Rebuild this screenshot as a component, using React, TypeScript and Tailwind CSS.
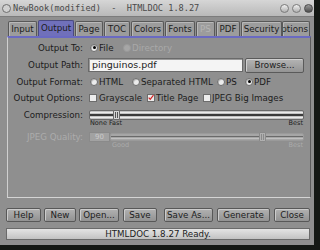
import React from 'react';

const tabs = [
  { label: 'Input', w: 'w-[29px]' },
  { label: 'Output', w: 'w-[36px]', active: true },
  { label: 'Page', w: 'w-[28px]' },
  { label: 'TOC', w: 'w-[26px]' },
  { label: 'Colors', w: 'w-[33px]' },
  { label: 'Fonts', w: 'w-[30px]' },
  { label: 'PS', w: 'w-[19px]', disabled: true },
  { label: 'PDF', w: 'w-[24px]' },
  { label: 'Security', w: 'w-[41px]' },
];

const buttons = [
  { label: 'Help', cls: 'w-[35px] ml-0' },
  { label: 'New', cls: 'w-[32px] ml-[3px]' },
  { label: 'Open...', cls: 'w-[40px] ml-[3px]' },
  { label: 'Save', cls: 'w-[34px] ml-[4px]' },
  { label: 'Save As...', cls: 'w-[49px] ml-[7px]' },
  { label: 'Generate', cls: 'w-[53px] ml-[4px]' },
  { label: 'Close', cls: 'w-[36px] ml-[4px]' },
];

function Radio({ checked, disabled }: { checked?: boolean; disabled?: boolean }) {
  return (
    <span
      className={
        disabled
          ? 'w-[8px] h-[8px] rounded-full bg-[#a6a6a6] border border-[#9a9a9a] shrink-0'
          : 'w-[8px] h-[8px] rounded-full bg-[#ececec] border border-[#6c6c6c] shadow-[inset_1px_1px_0_#bdbdbd] flex items-center justify-center shrink-0'
      }
    >
      {checked && <span className="w-[3px] h-[3px] rounded-full bg-black" />}
    </span>
  );
}

function Check({ checked }: { checked?: boolean }) {
  return (
    <span className="w-[8px] h-[8px] bg-[#ececec] border border-[#6c6c6c] flex items-center justify-center shrink-0">
      {checked && (
        <svg width="7" height="7" viewBox="0 0 7 7">
          <path d="M0.8 3.6 L2.6 5.6 L6.4 0.8" stroke="#d42020" strokeWidth="1.4" fill="none" />
        </svg>
      )}
    </span>
  );
}

function Label({ children, disabled }: { children: React.ReactNode; disabled?: boolean }) {
  return (
    <span className={`w-[75px] text-right shrink-0 whitespace-nowrap ${disabled ? 'text-[#acacac]' : ''}`}>
      {children}
    </span>
  );
}

function Thumb() {
  return (
    <span className="w-[7px] h-[10px] bg-[#d4d4d4] border border-[#6a6a6a] rounded-[1px] flex items-center justify-center gap-[1px]">
      <span className="w-px h-[6px] bg-[#555]" />
      <span className="w-px h-[6px] bg-[#555]" />
    </span>
  );
}

export default function App() {
  return (
    <div className="w-[320px] h-[250px] bg-[#141814] flex overflow-hidden font-['DejaVu_Sans',sans-serif] text-[8.7px] leading-none text-[#1c1c1c]">
      <div className="w-[314px] h-[245px] bg-[#8f8f8f] flex flex-col">
        {/* title bar */}
        <div className="h-[17px] bg-gradient-to-b from-[#d6d6d6] to-[#b9b9b9] flex items-center pl-[2px] pr-[1px] border-b border-[#7c7c7c]">
          <span className="w-[9px] h-[9px] rounded-full border border-[#6e6e6e] bg-[#d0d0d0]" />
          <span className="ml-[2px] font-['DejaVu_Sans_Mono',monospace] text-[8.6px] text-[#4a4a4a] whitespace-pre">
            NewBook(modified)  -  HTMLDOC 1.8.27
          </span>
          <div className="ml-auto flex gap-[3px]">
            <span className="w-[9px] h-[9px] rounded-full border border-[#7a7a7a] bg-gradient-to-b from-[#f0f0f0] to-[#b0b0b0]" />
            <span className="w-[9px] h-[9px] rounded-full border border-[#7a7a7a] bg-gradient-to-b from-[#f0f0f0] to-[#b0b0b0]" />
            <span className="w-[9px] h-[9px] rounded-full border border-[#4a4a4a] bg-gradient-to-b from-[#9a9a9a] to-[#4e4e4e]" />
          </div>
        </div>

        <div className="flex flex-col pl-[6px]">
          {/* tabs */}
          <div className="mt-[3px] h-[16px] flex items-end pl-[2px] gap-[1px]">
            {tabs.map((t) => (
              <div
                key={t.label}
                className={`${t.w} shrink-0 flex items-center justify-center border border-b-0 rounded-t-[2px] ${
                  t.active
                    ? 'h-[16px] bg-[#7070bb] border-[#4a4a80]'
                    : 'h-[15px] bg-[#9c9c9c] border-[#585858] shadow-[inset_1px_1px_0_#b8b8b8]'
                } ${t.disabled ? 'text-[#b4b4b4]' : ''}`}
              >
                {t.label}
              </div>
            ))}
            <div className="w-[28px] -ml-[1px] h-[15px] shrink-0 flex items-center justify-end pr-[1px] overflow-hidden border border-b-0 border-[#585858] rounded-t-[2px] bg-[#9c9c9c] shadow-[inset_1px_1px_0_#b8b8b8]">
              <span className="whitespace-nowrap">Options</span>
            </div>
          </div>

          {/* panel */}
          <div className="ml-[1px] w-[304px] h-[162px] border-t-2 border-t-[#6a6ac2] border-l border-l-[#cfcfcf] border-b border-b-[#d4d4d4] border-r border-r-[#5c5c5c] flex flex-col">
            <div className="mt-[2px] h-[16px] flex items-center">
              <Label>Output To:</Label>
              <div className="ml-[6px] flex items-center">
                <div className="w-[34px] flex items-center pl-[1px] gap-[1px]">
                  <Radio checked />
                  <span>File</span>
                </div>
                <div className="flex items-center gap-[1px] text-[#a9a9a9]">
                  <Radio disabled />
                  <span>Directory</span>
                </div>
              </div>
            </div>

            <div className="h-[18px] flex items-center">
              <Label>Output Path:</Label>
              <div className="ml-[5px] w-[155px] h-[14px] bg-[#f4f4f4] border border-[#6a6a6a] shadow-[inset_1px_1px_0_#9a9a9a] flex items-center pl-[3px] text-[9.5px]">
                pinguinos.pdf
              </div>
              <div className="ml-[2px] w-[59px] h-[15px] flex items-center justify-center border border-[#5a5a5a] rounded-[2px] bg-gradient-to-b from-[#b4b4b4] to-[#949494] shadow-[inset_1px_1px_0_#d0d0d0]">
                Browse...
              </div>
            </div>

            <div className="h-[16px] flex items-center">
              <Label>Output Format:</Label>
              <div className="ml-[6px] flex items-center">
                <div className="w-[42px] flex items-center pl-[1px] gap-[1px]">
                  <Radio />
                  <span>HTML</span>
                </div>
                <div className="w-[86px] flex items-center pl-[1px] gap-[1px]">
                  <Radio />
                  <span className="whitespace-nowrap">Separated HTML</span>
                </div>
                <div className="w-[28px] flex items-center gap-[1px]">
                  <Radio />
                  <span>PS</span>
                </div>
                <div className="flex items-center gap-[1px]">
                  <Radio checked />
                  <span>PDF</span>
                </div>
              </div>
            </div>

            <div className="h-[16px] flex items-center">
              <Label>Output Options:</Label>
              <div className="ml-[6px] flex items-center">
                <div className="w-[58px] flex items-center gap-[2px]">
                  <Check />
                  <span>Grayscale</span>
                </div>
                <div className="w-[56px] flex items-center gap-[1px]">
                  <Check checked />
                  <span className="whitespace-nowrap">Title Page</span>
                </div>
                <div className="flex items-center gap-[1px]">
                  <Check />
                  <span className="whitespace-nowrap">JPEG Big Images</span>
                </div>
              </div>
            </div>

            <div className="mt-[4px] h-[10px] flex items-center">
              <Label>Compression:</Label>
              <div className="ml-[6px] w-[215px] h-[10px] relative flex items-center border border-[#6a6a6a] rounded-[2px] bg-[#c4c4c4]">
                <div className="absolute left-0 right-0 top-[1px] h-px bg-[#ececec]" />
                <div className="absolute left-0 right-0 top-[3px] h-[2px] bg-[#3c3c3c]" />
                <div className="absolute left-0 right-0 top-[6px] h-px bg-[#ececec]" />
                <div className="absolute left-[23px] -top-[1px]">
                  <Thumb />
                </div>
              </div>
            </div>
            <div className="h-[7px] flex items-center text-[6.5px]">
              <span className="ml-[82px]">None</span>
              <span className="ml-[2px]">Fast</span>
              <span className="ml-auto mr-[7px]">Best</span>
            </div>

            <div className="mt-[5px] h-[10px] flex items-center">
              <Label disabled>JPEG Quality:</Label>
              <div className="ml-[6px] w-[21px] h-[10px] bg-[#a2a2a2] border border-[#8a8a8a] flex items-center pl-[5px] text-[7px] text-[#cacaca]">
                90
              </div>
              <div className="w-[194px] h-[8px] relative border border-[#9a9a9a] rounded-[2px] bg-[#a6a6a6]">
                <div className="absolute left-0 right-0 top-[2px] h-px bg-[#6a6a6a]" />
                <div className="absolute left-0 right-0 top-[4px] h-px bg-[#c0c0c0]" />
                <div className="absolute left-[148px] -top-[2px] w-[7px] h-[10px] bg-[#b0b0b0] border border-[#8a8a8a] rounded-[1px] flex items-center justify-center gap-[1px]">
                  <span className="w-px h-[6px] bg-[#8a8a8a]" />
                  <span className="w-px h-[6px] bg-[#8a8a8a]" />
                </div>
              </div>
            </div>
            <div className="h-[7px] flex items-center text-[6.5px] text-[#ababab]">
              <span className="ml-[104px]">Good</span>
              <span className="ml-auto mr-[7px]">Best</span>
            </div>
          </div>

          {/* buttons */}
          <div className="mt-[10px] h-[14px] flex">
            {buttons.map((b) => (
              <div
                key={b.label}
                className={`${b.cls} shrink-0 flex items-center justify-center whitespace-nowrap border border-[#585858] rounded-[2px] bg-gradient-to-b from-[#b2b2b2] to-[#929292] shadow-[inset_1px_1px_0_#cccccc]`}
              >
                {b.label}
              </div>
            ))}
          </div>

          {/* status */}
          <div className="mt-[6px] w-[304px] h-[12px] flex items-center justify-center border border-[#6a6a6a] bg-gradient-to-b from-[#e4e4e4] to-[#c2c2c2]">
            HTMLDOC 1.8.27 Ready.
          </div>
        </div>
      </div>
    </div>
  );
}
